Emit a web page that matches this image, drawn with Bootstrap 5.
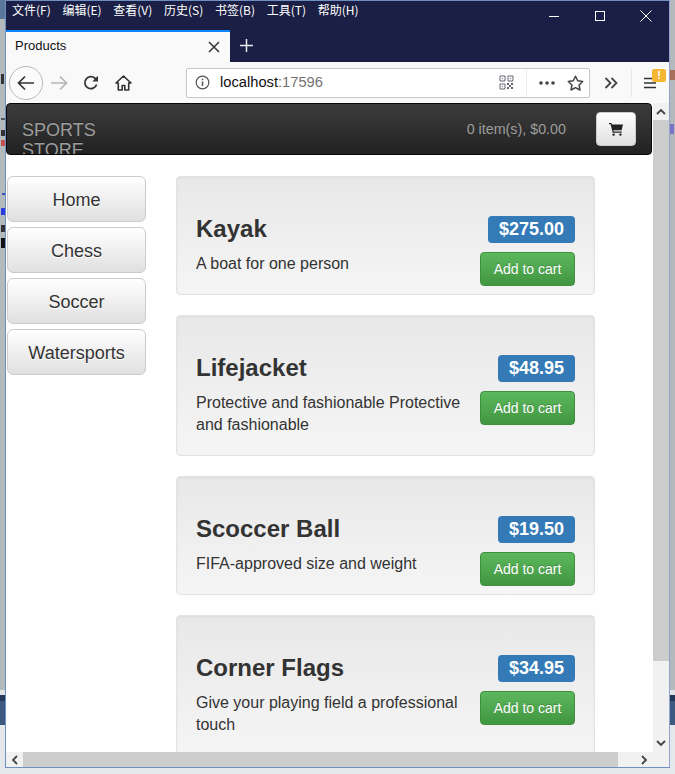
<!DOCTYPE html>
<html lang="en">

<head>
    <meta charset="UTF-8">
    <meta name="viewport" content="width=device-width, initial-scale=1.0">
    <title>Products</title>
    <link href="https://cdn.jsdelivr.net/npm/bootstrap@5.3.3/dist/css/bootstrap.min.css" rel="stylesheet">
    <style>
        html, body { height: 774px; overflow: hidden; }
        body { background: #e4e8ea; font-family: "Liberation Sans", Arial, sans-serif; color: #333; }
        .desk { height: 774px; }
        .win { width: 665px; height: 768px; border: 1px solid #6f8fc0; border-right-color: #8ea4cc; background: #fff; flex: none; }

        .menu-row { height: 29px; background: #1b1f45; color: #fff; padding-left: 6px; font: 12px "Noto Sans CJK SC", "Liberation Sans", sans-serif; }
        .menu-row .mi { margin-right: 11.7px; line-height: 18px; }
        .win-btns { margin-left: auto; }
        .win-btn { width: 46px; height: 29px; }
        .tab-row { height: 32px; background: #1b1f45; }
        .tab-cur { width: 224px; height: 32px; background: #f9f9fa; border-top: 2px solid #0a84ff; padding: 0 10px 2px 9px; font-size: 13px; color: #111; }
        .tab-x { margin-left: auto; margin-top: 2px; }
        .tab-plus { margin: 8px 0 0 9px; }
        .tool-row { height: 41px; background: #f9f9fa; padding-left: 3px; }
        .back-btn { width: 34px; height: 34px; border: 1px solid #b9b9bb; border-radius: 50%; background: #fbfbfb; }
        .fwd-ico { margin-left: 7px; }
        .reload-ico { margin-left: 15px; }
        .home-ico { margin-left: 16px; }
        .url-box { width: 404px; height: 30px; margin-left: 54px; background: #fff; border: 1px solid #c8c8ca; border-radius: 2px; padding: 0 5px 0 8px; font-size: 14.7px; color: #111; }
        .url-info { margin-right: 10px; }
        .url-port { color: #737373; }
        .url-sep { width: 1px; height: 28px; background: #ececec; margin: 0 11px 0 12px; }
        .star-ico { margin-left: 11px; }
        .more-ico { margin-left: 14px; }
        .tool-sep { width: 1px; height: 28px; background: #e6e6e6; margin-left: 13px; }
        .menu-ico { margin-left: 12px; }
        .warn-mark { top: -8px; right: -10px; width: 14px; height: 13px; background: #f5b731; border-radius: 2px; color: #fff; font-size: 11px; font-weight: 700; line-height: 13px; text-align: center; }

        .view { height: 649px; }
        .page-area { width: 647px; overflow: hidden; background: #fff; }
        .shop-bar { height: 52px; margin-right: 1px; background: linear-gradient(to bottom, #3c3c3c, #222); border: 1px solid #080808; border-radius: 4px; overflow: hidden; padding: 0 15px 0 15px; color: #9d9d9d; }
        .shop-brand { width: 100px; font-size: 18px; line-height: 20px; padding-top: 16px; height: 52px; align-self: flex-start; text-shadow: 0 -1px 0 rgba(0,0,0,.25); }
        .shop-total { margin-left: auto; margin-right: 30px; padding-top: 1px; font-size: 14.3px; }
        .cart-btn { width: 40px; height: 34px; padding: 0; background: linear-gradient(to bottom, #fff, #e0e0e0); border: 1px solid #ccc; border-radius: 4px; }

        .shop-body { padding-top: 21px; }
        .side-col { width: 139px; margin-left: 1px; margin-right: 30px; gap: 5px; flex: none; }
        .side-btn { height: 46px; font-size: 18px; color: #333; background: linear-gradient(to bottom, #fff, #e0e0e0); border: 1px solid #ccc; border-radius: 6px; padding: 2px 0 0; text-shadow: 0 1px 0 #fff; }
        .prod-col { width: 419px; gap: 20px; flex: none; }
        .prod-well { background: linear-gradient(to bottom, #e8e8e8, #f5f5f5); border: 1px solid #e3e3e3; border-radius: 4px; padding: 19px; box-shadow: inset 0 1px 3px rgba(0,0,0,.05); }
        .prod-head { margin-top: 20px; height: 27px; }
        .prod-name { font-size: 24px; font-weight: 700; line-height: 27px; margin: -2px 0 0; color: #333; }
        .prod-price { margin-left: auto; height: 27px; background: #337ab7; color: #fff; border-radius: 4px; font-size: 18px; font-weight: 700; line-height: 27px; padding: 0 11px; }
        .prod-foot { margin-top: 9px; gap: 18px; }
        .prod-desc { font-size: 16px; line-height: 22px; color: #333; flex: 1; margin: 1px 0 0; }
        .add-btn { flex: none; width: 95px; height: 34px; margin-bottom: -11px; padding: 0; font-size: 14px; color: #fff; background: linear-gradient(to bottom, #5cb85c, #419641); border: 1px solid #3e8f3e; border-radius: 4px; text-shadow: 0 -1px 0 rgba(0,0,0,.2); }

        .vscroll { width: 16px; background: #f1f1f1; }
        .vthumb { height: 541px; background: #cdcdcd; }
        .vscroll-end { height: 17px; flex: none; }
        .hscroll { height: 15px; background: #f1f1f1; }
        .hthumb { width: 595px; height: 15px; background: #cdcdcd; }
        .scroll-end { width: 17px; flex: none; }
        .scroll-next { margin-left: auto; margin-right: 21px; }
    </style>
</head>

<body>
    <div class="desk d-flex">
        <svg class="flex-none" width="5" height="774" viewBox="0 0 5 774">
            <rect width="5" height="774" fill="#b2babd"/>
            <rect width="5" height="19" fill="#5a7698"/>
            <rect x="1" y="74" width="3" height="10" fill="#333"/>
            <rect x="1" y="118" width="4" height="2" fill="#556"/>
            <rect x="1" y="130" width="4" height="6" fill="#333"/>
            <rect x="1" y="140" width="4" height="6" fill="#c65050"/>
            <rect x="2" y="193" width="3" height="2" fill="#3a50c0"/>
            <rect x="1" y="208" width="4" height="7" fill="#2c3ce0"/>
            <rect x="1" y="225" width="4" height="7" fill="#333"/>
            <rect x="1" y="238" width="4" height="10" fill="#111"/>
            <rect y="690" width="5" height="5" fill="#dfe3e6"/>
            <rect y="695" width="5" height="6" fill="#24395a"/>
            <rect y="701" width="5" height="24" fill="#3c5a80"/>
            <rect y="725" width="5" height="49" fill="#e4e8ea"/>
        </svg>
        <div class="win d-flex flex-column">
            <div class="menu-row d-flex align-items-start">
                <span class="mi">文件(F)</span>
                <span class="mi">编辑(E)</span>
                <span class="mi">查看(V)</span>
                <span class="mi">历史(S)</span>
                <span class="mi">书签(B)</span>
                <span class="mi">工具(T)</span>
                <span class="mi">帮助(H)</span>
                <div class="win-btns d-flex">
                    <div class="win-btn d-flex align-items-center justify-content-center">
                        <svg width="12" height="12" viewBox="0 0 12 12"><path d="M1 6.5h10" stroke="#fff" fill="none"/></svg>
                    </div>
                    <div class="win-btn d-flex align-items-center justify-content-center">
                        <svg width="12" height="12" viewBox="0 0 12 12"><rect x="1.5" y="1.5" width="9" height="9" stroke="#fff" fill="none"/></svg>
                    </div>
                    <div class="win-btn d-flex align-items-center justify-content-center">
                        <svg width="12" height="12" viewBox="0 0 12 12"><path d="M.5.5l11 11M11.5.5l-11 11" stroke="#fff" fill="none"/></svg>
                    </div>
                </div>
            </div>
            <div class="tab-row d-flex">
                <div class="tab-cur d-flex align-items-center">
                    <span>Products</span>
                    <svg class="tab-x" width="12" height="12" viewBox="0 0 12 12"><path d="M1 1l10 10M11 1L1 11" stroke="#333" stroke-width="1.5" fill="none"/></svg>
                </div>
                <svg class="tab-plus" width="15" height="15" viewBox="0 0 15 15"><path d="M7.5 1v13M1 7.5h13" stroke="#e8e8ee" stroke-width="1.5" fill="none"/></svg>
            </div>
            <div class="tool-row d-flex align-items-center">
                <div class="back-btn d-flex align-items-center justify-content-center">
                    <svg width="18" height="16" viewBox="0 0 18 16"><path d="M8 1.5L1.5 8 8 14.5M2 8h15" stroke="#333" stroke-width="1.7" fill="none"/></svg>
                </div>
                <svg class="fwd-ico" width="18" height="16" viewBox="0 0 18 16"><path d="M10 1.5L16.5 8 10 14.5M16 8H1" stroke="#b5b5b7" stroke-width="1.7" fill="none"/></svg>
                <svg class="reload-ico" width="16" height="16" viewBox="0 0 16 16"><path d="M13.6 9.5A6 6 0 1 1 12 3.3L14.5 5.5" stroke="#333" stroke-width="1.8" fill="none"/><path d="M15 .8V6.5H9.3z" fill="#333"/></svg>
                <svg class="home-ico" width="17" height="16" viewBox="0 0 17 16"><path d="M8.5 1L1 8h2.3v7h3.9v-4.5h2.6V15h3.9V8H16z" stroke="#333" stroke-width="1.6" fill="none" stroke-linejoin="round"/></svg>
                <div class="url-box d-flex align-items-center">
                    <svg class="url-info flex-none" width="15" height="15" viewBox="0 0 15 15"><circle cx="7.5" cy="7.5" r="6.3" stroke="#555" stroke-width="1.2" fill="none"/><path d="M7.5 6.5v4.5M7.5 3.8v1.5" stroke="#555" stroke-width="1.5"/></svg>
                    <span>localhost<span class="url-port">:17596</span></span>
                    <svg class="ms-auto" width="15" height="15" viewBox="0 0 15 15"><path d="M1 1h5v5H1zM9 1h5v5H9zM1 9h5v5H1z" stroke="#667" fill="none"/><path d="M3 3h1v1H3zM11 3h1v1h-1zM3 11h1v1H3zM8 8h2v2H8zM12 8h2v2h-2zM10 10h2v2h-2zM8 12h2v2H8zM12 12h2v2h-2z" fill="#667"/></svg>
                    <div class="url-sep"></div>
                    <svg width="18" height="6" viewBox="0 0 18 6"><circle cx="3" cy="3" r="1.8" fill="#444"/><circle cx="9" cy="3" r="1.8" fill="#444"/><circle cx="15" cy="3" r="1.8" fill="#444"/></svg>
                    <svg class="star-ico" width="17" height="16" viewBox="0 0 17 16"><path d="M8.5 1.2l2.2 4.6 5 .7-3.6 3.5.9 5-4.5-2.4L4 15l.9-5L1.3 6.5l5-.7z" stroke="#444" stroke-width="1.5" fill="none" stroke-linejoin="round"/></svg>
                </div>
                <svg class="more-ico" width="14" height="12" viewBox="0 0 14 12"><path d="M1.5 1l5 5-5 5M7.5 1l5 5-5 5" stroke="#444" stroke-width="1.8" fill="none"/></svg>
                <div class="tool-sep"></div>
                <div class="position-relative menu-ico">
                    <svg class="d-block" width="12" height="12" viewBox="0 0 12 12"><path d="M0 1.5h12M0 6h12M0 10.5h12" stroke="#333" stroke-width="1.6"/></svg>
                    <div class="warn-mark position-absolute">!</div>
                </div>
            </div>
            <div class="view d-flex">
                <div class="page-area">
                    <div class="shop-bar d-flex align-items-center">
                        <div class="shop-brand">SPORTS STORE</div>
                        <div class="shop-total">0 item(s), $0.00</div>
                        <button class="cart-btn d-flex align-items-center justify-content-center" aria-label="Cart">
                            <svg width="14" height="14" viewBox="0 0 14 14"><path d="M0 1h2.4l.5 1.6H14l-1.4 5.7H4.4l.3 1.2h8v1.2H3.7L1.6 2.2H0z" fill="#222"/><circle cx="4.6" cy="12.6" r="1.2" fill="#222"/><circle cx="11.4" cy="12.6" r="1.2" fill="#222"/></svg>
                        </button>
                    </div>
                    <div class="shop-body d-flex">
                        <div class="side-col d-flex flex-column">
                            <button class="side-btn">Home</button>
                            <button class="side-btn">Chess</button>
                            <button class="side-btn">Soccer</button>
                            <button class="side-btn">Watersports</button>
                        </div>
                        <div class="prod-col d-flex flex-column">
                            <div class="prod-well">
                                <div class="prod-head d-flex align-items-center">
                                    <h3 class="prod-name">Kayak</h3>
                                    <span class="prod-price">$275.00</span>
                                </div>
                                <div class="prod-foot d-flex align-items-start">
                                    <p class="prod-desc">A boat for one person</p>
                                    <button class="add-btn">Add to cart</button>
                                </div>
                            </div>
                            <div class="prod-well">
                                <div class="prod-head d-flex align-items-center">
                                    <h3 class="prod-name">Lifejacket</h3>
                                    <span class="prod-price">$48.95</span>
                                </div>
                                <div class="prod-foot d-flex align-items-start">
                                    <p class="prod-desc">Protective and fashionable Protective and fashionable</p>
                                    <button class="add-btn">Add to cart</button>
                                </div>
                            </div>
                            <div class="prod-well">
                                <div class="prod-head d-flex align-items-center">
                                    <h3 class="prod-name">Scoccer Ball</h3>
                                    <span class="prod-price">$19.50</span>
                                </div>
                                <div class="prod-foot d-flex align-items-start">
                                    <p class="prod-desc">FIFA-approved size and weight</p>
                                    <button class="add-btn">Add to cart</button>
                                </div>
                            </div>
                            <div class="prod-well">
                                <div class="prod-head d-flex align-items-center">
                                    <h3 class="prod-name">Corner Flags</h3>
                                    <span class="prod-price">$34.95</span>
                                </div>
                                <div class="prod-foot d-flex align-items-start">
                                    <p class="prod-desc">Give your playing field a professional touch</p>
                                    <button class="add-btn">Add to cart</button>
                                </div>
                            </div>
                        </div>
                    </div>
                </div>
                <div class="vscroll d-flex flex-column">
                    <div class="vscroll-end d-flex align-items-center justify-content-center">
                        <svg width="10" height="7" viewBox="0 0 10 7"><path d="M1 6l4-4 4 4" stroke="#444" stroke-width="1.8" fill="none"/></svg>
                    </div>
                    <div class="vthumb"></div>
                    <div class="mt-auto vscroll-end d-flex align-items-center justify-content-center">
                        <svg width="10" height="7" viewBox="0 0 10 7"><path d="M1 1l4 4 4-4" stroke="#444" stroke-width="1.8" fill="none"/></svg>
                    </div>
                </div>
            </div>
            <div class="hscroll d-flex align-items-center">
                <div class="scroll-end d-flex justify-content-center">
                    <svg width="7" height="10" viewBox="0 0 7 10"><path d="M6 1L2 5l4 4" stroke="#444" stroke-width="1.8" fill="none"/></svg>
                </div>
                <div class="hthumb"></div>
                <div class="scroll-next">
                    <svg class="d-block" width="7" height="10" viewBox="0 0 7 10"><path d="M1 1l4 4-4 4" stroke="#444" stroke-width="1.8" fill="none"/></svg>
                </div>
            </div>
        </div>
        <svg class="flex-none" width="5" height="774" viewBox="0 0 5 774">
            <rect width="5" height="774" fill="#b4b9bd"/>
            <rect y="70" width="5" height="10" fill="#a8705a"/>
            <rect y="124" width="4" height="10" fill="#7a74c4"/>
            <rect y="690" width="5" height="5" fill="#dfe3e6"/>
            <rect y="695" width="5" height="6" fill="#24395a"/>
            <rect y="701" width="5" height="24" fill="#3c5a80"/>
            <rect y="725" width="5" height="49" fill="#e4e8ea"/>
        </svg>
    </div>
    <script src="https://cdn.jsdelivr.net/npm/bootstrap@5.3.3/dist/js/bootstrap.bundle.min.js"></script>
</body>

</html>
